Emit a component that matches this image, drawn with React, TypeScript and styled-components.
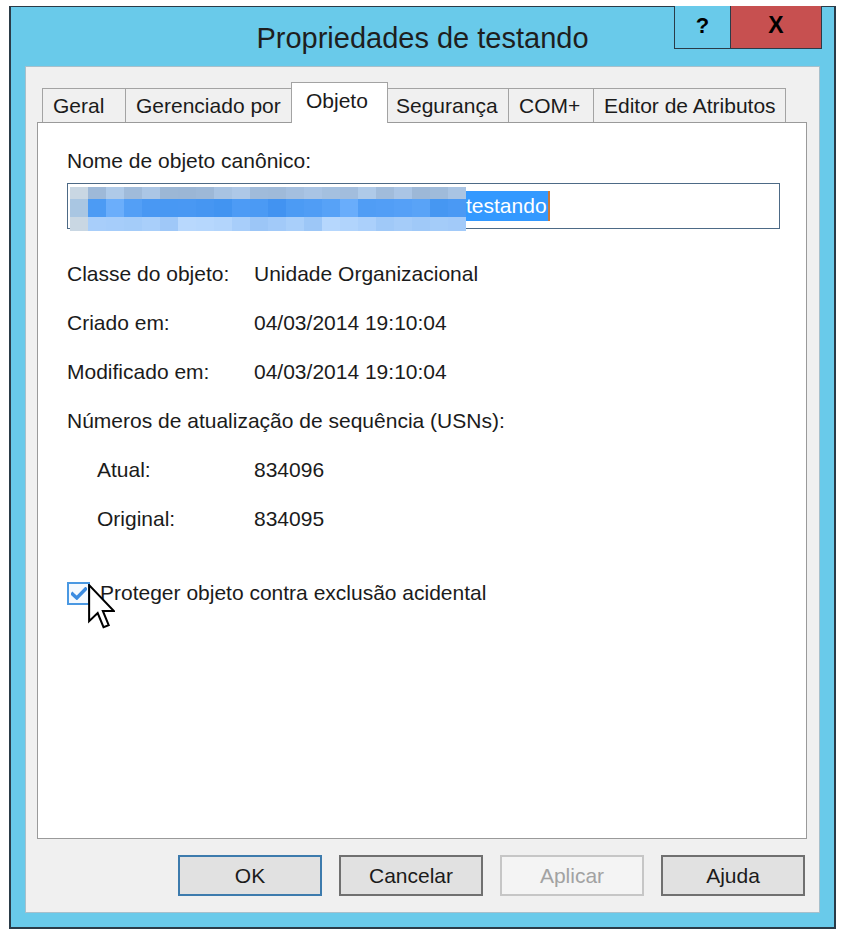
import React from "react";
import styled, { createGlobalStyle } from "styled-components";

const Global = createGlobalStyle`
  html, body { margin: 0; padding: 0; background: #ffffff; }
  body {
    font-family: "Liberation Sans", Arial, sans-serif;
    color: #1b1b1b;
    -webkit-font-smoothing: antialiased;
  }
  * { box-sizing: border-box; }
`;

const Page = styled.div`
  padding: 6px 0 0 9px;
`;

const Window = styled.div`
  width: 827px;
  height: 923px;
  background: #69caea;
  border: 2px solid #2a3b48;
  border-top-width: 1px;
  display: flex;
  flex-direction: column;
  padding: 0 14px 14px 14px;
`;

const TitleBar = styled.div`
  height: 59px;
  display: grid;
  grid-template-columns: 1fr auto 1fr;
  align-items: start;
  margin: 0 -14px;
`;

const Title = styled.div`
  grid-column: 2;
  font-size: 29px;
  line-height: 34px;
  color: #1e1e1e;
  margin-top: 14px;
  white-space: nowrap;
`;

const Caption = styled.div`
  grid-column: 3;
  justify-self: end;
  display: flex;
  margin-right: 12px;
  margin-top: -1px;
  border: 1px solid #2a3b48;
  border-top: none;
`;

const CaptionButton = styled.div<{ $close?: boolean }>`
  width: ${(p) => (p.$close ? 91 : 55)}px;
  height: 42px;
  background: ${(p) => (p.$close ? "#c75050" : "#69caea")};
  border-left: ${(p) => (p.$close ? "1px solid #2a3b48" : "none")};
  display: flex;
  align-items: center;
  justify-content: center;
  font-weight: bold;
  font-size: ${(p) => (p.$close ? 23 : 22)}px;
  color: #000;
  padding-bottom: 3px;
`;

const Client = styled.div`
  flex: 1;
  background: #f0f0f0;
  border: 1px solid #a7c0cc;
  display: flex;
  flex-direction: column;
  padding: 15px 12px 16px 11px;
`;

const TabRow = styled.div`
  display: flex;
  align-items: flex-end;
  padding-left: 5px;
  height: 40px;
`;

const Tab = styled.div<{ $w: number; $active?: boolean }>`
  width: ${(p) => p.$w}px;
  height: ${(p) => (p.$active ? 41 : 34)}px;
  border: 1px solid #a3a3a3;
  border-bottom: none;
  background: ${(p) => (p.$active ? "#ffffff" : "#f0f0f0")};
  font-size: 21px;
  line-height: 24px;
  padding-left: ${(p) => (p.$active ? 14 : 10)}px;
  padding-top: ${(p) => (p.$active ? 6 : 5)}px;
  white-space: nowrap;
  position: relative;
  z-index: ${(p) => (p.$active ? 2 : 1)};
  margin: ${(p) => (p.$active ? "0 -2px -1px -2px" : "0")};
  & + & {
    margin-left: ${(p) => (p.$active ? -3 : -1)}px;
  }
`;

const Panel = styled.div`
  flex: 1;
  background: #ffffff;
  border: 1px solid #9a9a9a;
  padding: 26px 26px 0 29px;
  display: flex;
  flex-direction: column;
`;

const FieldLabel = styled.div`
  font-size: 21px;
  line-height: 24px;
`;

const TextBox = styled.div`
  margin-top: 10px;
  height: 46px;
  border: 1px solid #4d6a86;
  display: flex;
  align-items: stretch;
  padding-left: 2px;
`;

const Mosaic = styled.svg`
  display: block;
  flex: none;
  margin-top: 3px;
  margin-bottom: -4px;
`;

const Selected = styled.span`
  align-self: center;
  background: #3399ff;
  color: #ffffff;
  font-size: 21px;
  line-height: 30px;
  height: 30px;
  padding-right: 1px;
  border-right: 2px solid #c8783a;
`;

const InfoGrid = styled.div`
  margin-top: 33px;
  display: grid;
  grid-template-columns: 187px 1fr;
  row-gap: 25px;
  font-size: 21px;
  line-height: 24px;
`;

const InfoLabel = styled.div<{ $indent?: boolean }>`
  padding-left: ${(p) => (p.$indent ? 30 : 0)}px;
  white-space: nowrap;
`;

const InfoSpan = styled.div`
  grid-column: 1 / span 2;
  white-space: nowrap;
`;

const CheckRow = styled.div`
  margin-top: 50px;
  display: flex;
  align-items: center;
  gap: 10px;
  height: 24px;
  position: relative;
  font-size: 21px;
  line-height: 24px;
`;

const CheckBox = styled.div`
  width: 23px;
  height: 23px;
  border: 2px solid #4a98e2;
  background: #f4f9fe;
  display: flex;
  align-items: center;
  justify-content: center;
`;

const Cursor = styled.svg`
  position: absolute;
  left: 21px;
  top: 3px;
  z-index: 3;
`;

const ButtonRow = styled.div`
  margin-top: 16px;
  display: flex;
  justify-content: flex-end;
  gap: 17px;
  padding-right: 2px;
`;

const Button = styled.div<{ $kind?: "default" | "disabled" }>`
  width: 144px;
  height: 41px;
  display: flex;
  align-items: center;
  justify-content: center;
  font-size: 21px;
  padding-top: 1px;
  background: ${(p) => (p.$kind === "disabled" ? "#f4f4f4" : "#e1e1e1")};
  color: ${(p) => (p.$kind === "disabled" ? "#a2a2a2" : "#1b1b1b")};
  border: ${(p) =>
    p.$kind === "default"
      ? "2px solid #3d7bad"
      : p.$kind === "disabled"
      ? "2px solid #c6c6c6"
      : "2px solid #707070"};
`;

const tabs = [
  { label: "Geral", w: 84 },
  { label: "Gerenciado por", w: 167 },
  { label: "Objeto", w: 97, active: true },
  { label: "Segurança", w: 124 },
  { label: "COM+", w: 86 },
  { label: "Editor de Atributos", w: 193 },
];

const rows: { label: string; value?: string; indent?: boolean; span?: boolean }[] = [
  { label: "Classe do objeto:", value: "Unidade Organizacional" },
  { label: "Criado em:", value: "04/03/2014 19:10:04" },
  { label: "Modificado em:", value: "04/03/2014 19:10:04" },
  { label: "Números de atualização de sequência (USNs):", span: true },
  { label: "Atual:", value: "834096", indent: true },
  { label: "Original:", value: "834095", indent: true },
];

function mosaicColor(row: number, col: number): string {
  const r = Math.abs(Math.sin(row * 12.9898 + col * 78.233) * 43758.5453) % 1;
  if (row === 0) {
    const l = 72 + r * 8;
    return `hsl(212, ${40 + r * 16}%, ${l}%)`;
  }
  if (row === 1) {
    const l = 60 + r * 11;
    return `hsl(212, ${86 + r * 10}%, ${l}%)`;
  }
  const l = 79 + r * 7;
  return `hsl(212, ${85 + r * 10}%, ${l}%)`;
}

const CELL_W = 18;
const COLS = 22;
const ROW_H = [12, 18, 14];

function MosaicBlock() {
  const cells: React.ReactNode[] = [];
  let y = 0;
  ROW_H.forEach((h, ri) => {
    for (let c = 0; c < COLS; c++) {
      const fill = c === 0 ? (ri === 1 ? "#a9c6e2" : "#c9d7e3") : mosaicColor(ri, c);
      cells.push(<rect key={`${ri}-${c}`} x={c * CELL_W} y={y} width={CELL_W} height={h} fill={fill} />);
    }
    y += h;
  });
  return (
    <Mosaic width={396} height={44} viewBox="0 0 396 44">
      {cells}
    </Mosaic>
  );
}

export default function App() {
  return (
    <>
      <Global />
      <Page>
        <Window>
          <TitleBar>
            <Title>Propriedades de testando</Title>
            <Caption>
              <CaptionButton>?</CaptionButton>
              <CaptionButton $close>X</CaptionButton>
            </Caption>
          </TitleBar>
          <Client>
            <TabRow>
              {tabs.map((t) => (
                <Tab key={t.label} $w={t.w} $active={t.active}>
                  {t.label}
                </Tab>
              ))}
            </TabRow>
            <Panel>
              <FieldLabel>Nome de objeto canônico:</FieldLabel>
              <TextBox>
                <MosaicBlock />
                <Selected>testando</Selected>
              </TextBox>
              <InfoGrid>
                {rows.map((r) =>
                  r.span ? (
                    <InfoSpan key={r.label}>{r.label}</InfoSpan>
                  ) : (
                    <React.Fragment key={r.label}>
                      <InfoLabel $indent={r.indent}>{r.label}</InfoLabel>
                      <div>{r.value}</div>
                    </React.Fragment>
                  )
                )}
              </InfoGrid>
              <CheckRow>
                <CheckBox>
                  <svg width="16" height="13" viewBox="0 0 16 13">
                    <path d="M1.5 7 L5.8 11 L14.5 2" fill="none" stroke="#3b8be0" strokeWidth="3.4" strokeLinecap="square" />
                  </svg>
                </CheckBox>
                <span>Proteger objeto contra exclusão acidental</span>
                <Cursor width="27" height="45" viewBox="0 0 12 20">
                  <path
                    d="M0.5 0.5 L0.5 16.5 L4.3 12.9 L6.9 19.2 L9.2 18.3 L6.6 12 L11.5 12 Z"
                    fill="#ffffff"
                    stroke="#000000"
                    strokeWidth="0.9"
                    strokeLinejoin="miter"
                  />
                </Cursor>
              </CheckRow>
            </Panel>
            <ButtonRow>
              <Button $kind="default">OK</Button>
              <Button>Cancelar</Button>
              <Button $kind="disabled">Aplicar</Button>
              <Button>Ajuda</Button>
            </ButtonRow>
          </Client>
        </Window>
      </Page>
    </>
  );
}
